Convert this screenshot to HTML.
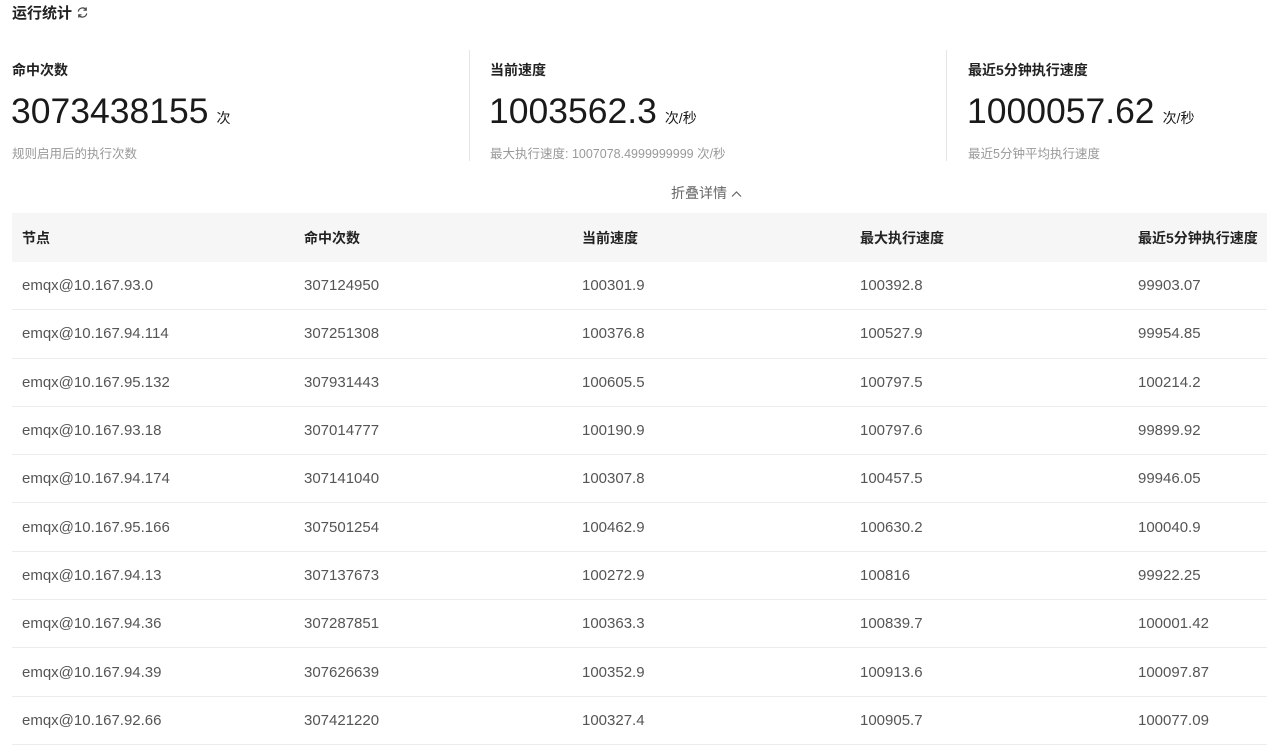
<!DOCTYPE html><html><head><meta charset="utf-8"><style>
body{margin:0;background:#fff;font-family:"Liberation Sans","Noto Sans CJK SC",sans-serif;color:#1d1d1d;width:1267px;height:732px;overflow:hidden;position:relative}
.a{position:absolute;white-space:nowrap}
.t{font-size:15px;font-weight:bold;color:#222}
.lab{font-size:14px;font-weight:bold;color:#222}
.big{font-size:35.5px;color:#1a1a1a}
.big span{font-size:14px;margin-left:8px}
.sub{font-size:12.5px;color:#999}
.div{position:absolute;width:1px;background:#e6e6e6;top:50px;height:111px}
table{position:absolute;left:12px;top:213px;width:1255px;border-collapse:collapse;font-size:15px;color:#555}
th{background:#f6f6f6;height:49px;text-align:left;font-size:14px;color:#222;padding:0 0 0 10px}
td{height:47.3px;border-bottom:1px solid #ececec;padding:0 0 0 10px}
</style></head><body>
<div class="a t" style="left:12px;top:2px">运行统计 <svg width="13" height="13" viewBox="0 0 14 14" style="vertical-align:-1px"><path d="M2.5 6a4.6 4.6 0 0 1 8.3-2M11.5 8a4.6 4.6 0 0 1-8.3 2" fill="none" stroke="#444" stroke-width="1.3"/><path d="M11 1.5v3h-3M3 12.5v-3h3" fill="none" stroke="#444" stroke-width="1.3"/></svg></div>
<div class="a lab" style="left:12px;top:60px">命中次数</div>
<div class="a big" style="left:11px;top:91px">3073438155<span>次</span></div>
<div class="a sub" style="left:12px;top:143px">规则启用后的执行次数</div>
<div class="div" style="left:469px"></div>
<div class="a lab" style="left:490px;top:60px">当前速度</div>
<div class="a big" style="left:489px;top:91px">1003562.3<span>次/秒</span></div>
<div class="a sub" style="left:490px;top:143px">最大执行速度: 1007078.4999999999 次/秒</div>
<div class="div" style="left:946px"></div>
<div class="a lab" style="left:968px;top:60px">最近5分钟执行速度</div>
<div class="a big" style="left:967px;top:91px">1000057.62<span>次/秒</span></div>
<div class="a sub" style="left:968px;top:143px">最近5分钟平均执行速度</div>
<div class="a" style="left:671px;top:183px;font-size:14px;color:#666">折叠详情 <svg width="11" height="8" viewBox="0 0 11 8"><path d="M1 6.5l4.5-4.5 4.5 4.5" fill="none" stroke="#666" stroke-width="1.2"/></svg></div>
<table>
<tr><th style="width:272px">节点</th><th style="width:268px">命中次数</th><th style="width:268px">当前速度</th><th style="width:268px">最大执行速度</th><th>最近5分钟执行速度</th></tr>
<tr><td>emqx@10.167.93.0</td><td>307124950</td><td>100301.9</td><td>100392.8</td><td>99903.07</td></tr>
<tr><td>emqx@10.167.94.114</td><td>307251308</td><td>100376.8</td><td>100527.9</td><td>99954.85</td></tr>
<tr><td>emqx@10.167.95.132</td><td>307931443</td><td>100605.5</td><td>100797.5</td><td>100214.2</td></tr>
<tr><td>emqx@10.167.93.18</td><td>307014777</td><td>100190.9</td><td>100797.6</td><td>99899.92</td></tr>
<tr><td>emqx@10.167.94.174</td><td>307141040</td><td>100307.8</td><td>100457.5</td><td>99946.05</td></tr>
<tr><td>emqx@10.167.95.166</td><td>307501254</td><td>100462.9</td><td>100630.2</td><td>100040.9</td></tr>
<tr><td>emqx@10.167.94.13</td><td>307137673</td><td>100272.9</td><td>100816</td><td>99922.25</td></tr>
<tr><td>emqx@10.167.94.36</td><td>307287851</td><td>100363.3</td><td>100839.7</td><td>100001.42</td></tr>
<tr><td>emqx@10.167.94.39</td><td>307626639</td><td>100352.9</td><td>100913.6</td><td>100097.87</td></tr>
<tr><td>emqx@10.167.92.66</td><td>307421220</td><td>100327.4</td><td>100905.7</td><td>100077.09</td></tr>
</table>
</body></html>
